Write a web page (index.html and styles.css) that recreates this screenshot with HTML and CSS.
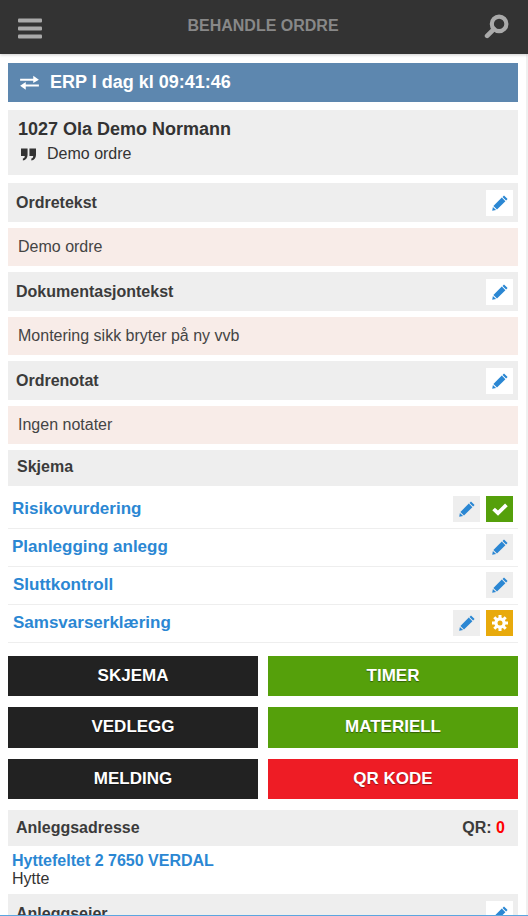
FILE: index.html
```html
<!DOCTYPE html>
<html lang="no">
<head>
<meta charset="utf-8">
<title>Behandle ordre</title>
<link rel="stylesheet" href="styles.css">
</head>
<body>
<svg class="defs" width="0" height="0" aria-hidden="true">
  <symbol id="pencil" viewBox="0 0 16 16">
    <path d="M12 0.4 15.6 4 14.1 5.5 10.5 1.9Z M9.8 2.6 13.4 6.2 5 14.6 1.4 11Z M0.9 11.9 4.1 15.1 0.2 15.8Z" fill="#2b87d3"/>
  </symbol>
</svg>
<header class="topbar">
  <svg class="menu-icon" viewBox="0 0 24 20"><rect y="0" width="24" height="4" rx="1"/><rect y="8" width="24" height="4" rx="1"/><rect y="16" width="24" height="4" rx="1"/></svg>
  <h1 class="title">BEHANDLE ORDRE</h1>
  <svg class="search-icon" viewBox="0 0 24 24"><circle cx="14.5" cy="9.5" r="7" fill="none" stroke="#aaa" stroke-width="4"/><path d="M9.5 14.5 3 21" stroke="#aaa" stroke-width="4.5" stroke-linecap="round"/></svg>
</header>
<main class="page">
  <div class="erp">
    <svg class="erp-icon" viewBox="0 0 20 16"><path d="M0 4H14V0.8L20 5 14 8.4V6.2H0Z M20 10H6V7.4L0 11.5 6 15.6V12.2H20Z" fill="#fff"/></svg>
    <span>ERP I dag kl 09:41:46</span>
  </div>
  <section class="order">
    <div class="order-name">1027 Ola Demo Normann</div>
    <div class="order-desc">
      <svg class="quote" viewBox="0 0 16 13"><path d="M0 0H7V7C7 10 5 12.5 2 13V10.8C3.5 10.4 4 9.4 4 8H0Z M9 0H16V7C16 10 14 12.5 11 13V10.8C12.5 10.4 13 9.4 13 8H9Z" fill="#333"/></svg>
      <span>Demo ordre</span>
    </div>
  </section>

  <div class="head"><span>Ordretekst</span><a class="ic white"><svg><use href="#pencil"/></svg></a></div>
  <div class="note">Demo ordre</div>
  <div class="head"><span>Dokumentasjontekst</span><a class="ic white"><svg><use href="#pencil"/></svg></a></div>
  <div class="note">Montering sikk bryter på ny vvb</div>
  <div class="head"><span>Ordrenotat</span><a class="ic white"><svg><use href="#pencil"/></svg></a></div>
  <div class="note">Ingen notater</div>

  <div class="head short skjema"><span>Skjema</span></div>
  <ul class="forms">
    <li><a>Risikovurdering</a><span class="ic grey"><svg><use href="#pencil"/></svg></span><span class="ic green"><svg viewBox="0 0 16 16"><path d="M1.6 8 6 12.2 14.4 3.8" fill="none" stroke="#fff" stroke-width="3.8"/></svg></span></li>
    <li><a>Planlegging anlegg</a><span class="ic grey"><svg><use href="#pencil"/></svg></span></li>
    <li><a class="in1">Sluttkontroll</a><span class="ic grey"><svg><use href="#pencil"/></svg></span></li>
    <li><a class="in1">Samsvarserklæring</a><span class="ic grey"><svg><use href="#pencil"/></svg></span><span class="ic amber"><svg viewBox="0 0 16 16"><path d="M8 0V16M0 8H16M2.3 2.3 13.7 13.7M13.7 2.3 2.3 13.7" stroke="#fff" stroke-width="3"/><circle cx="8" cy="8" r="5.7" fill="#fff"/><circle cx="8" cy="8" r="2.5" fill="#e8aa0c"/></svg></span></li>
  </ul>

  <div class="actions">
    <button class="btn dark">SKJEMA</button>
    <button class="btn green-btn">TIMER</button>
    <button class="btn dark tall">VEDLEGG</button>
    <button class="btn green-btn tall">MATERIELL</button>
    <button class="btn dark">MELDING</button>
    <button class="btn red">QR KODE</button>
  </div>

  <div class="head short"><span>Anleggsadresse</span><span class="qr">QR: <b>0</b></span></div>
  <div class="address">
    <a>Hyttefeltet 2 7650 VERDAL</a>
    <div>Hytte</div>
  </div>
  <div class="head"><span>Anleggseier</span><a class="ic white"><svg><use href="#pencil"/></svg></a></div>
</main>
<div class="bottom-line"></div>
</body>
</html>
```

FILE: styles.css
```css
* { box-sizing: border-box; }
html, body { margin: 0; padding: 0; height: 916px; overflow: hidden; background: #fff; }
body { font-family: "Liberation Sans", Arial, sans-serif; font-size: 16px; color: #333; position: relative; }
.defs { position: absolute; }

.topbar {
  height: 54px; background: #333; display: flex; align-items: center; justify-content: space-between;
  padding: 0 19px 0 18px; box-shadow: 0 1px 3px rgba(0,0,0,.2); position: relative;
}
.menu-icon { width: 24px; height: 21px; fill: #aaa; margin-top: 2px; }
.title { margin: -3px 0 0; font-size: 16px; line-height: 18px; font-weight: bold; color: #888; }
.search-icon { width: 25px; height: 25px; margin-top: -1px; }

.page { padding: 9px 8px 0 8px; border-right: 2px solid #f0f0f0; height: 862px; overflow: hidden; }
.erp {
  height: 39px; background: #5d87af; color: #fff; display: flex; align-items: center; gap: 11px;
  padding-left: 12px; font-size: 18px; font-weight: bold;
}
.erp-icon { width: 19px; height: 15px; }
.order { background: #eee; margin-top: 8px; height: 65px; padding: 9px 10px; }
.order-name { font-size: 18px; font-weight: bold; line-height: 20px; color: #333; }
.order-desc { display: flex; align-items: center; gap: 11px; margin-top: 5px; line-height: 20px; color: #333; padding-left: 3px; }
.quote { width: 15px; height: 13px; }

.head {
  height: 39px; background: #eee; display: flex; align-items: center; justify-content: space-between;
  padding: 0 5px 0 8px; margin-top: 8px; font-weight: bold; color: #3b3b3b;
}
.head.short { height: 36px; margin-top: 6px; padding-right: 13px; }
.head.skjema { padding-left: 9px; padding-bottom: 2px; }
.ic { width: 27px; height: 26px; display: flex; align-items: center; justify-content: center; flex: none; }
.ic svg { width: 16px; height: 16px; }
.white { background: #fff; }
.grey { background: #eee; }
.green { background: #55a00b; }
.amber { background: #e8aa0c; }
.note { height: 38px; margin-top: 6px; background: #f8ece8; padding: 0 10px; line-height: 37px; color: #444; }
.note + .head { margin-top: 6px; }

.forms { list-style: none; margin: 0; padding: 0; }
.forms li {
  height: 38px; border-bottom: 1px solid #eee; display: flex; align-items: center; gap: 6px;
  padding: 0 5px 1px 4px;
}
.forms li:first-child { height: 43px; padding-top: 4px; padding-bottom: 0; }
.forms a { margin-right: auto; font-size: 17px; font-weight: bold; color: #2b87d3; }
.forms a.in1 { margin-left: 1px; }

.actions { display: grid; grid-template-columns: 250px 250px; column-gap: 10px; margin-top: 13px; }
.btn {
  height: 40px; margin: 0 0 11px; border: 0; padding: 0 0 1px; font: bold 17px "Liberation Sans", Arial, sans-serif; color: #fff;
  text-shadow: 0 1px 1px rgba(0,0,0,.4);
}
.btn.tall { height: 41px; }
.dark { background: #222; }
.green-btn { background: #55a00b; }
.red { background: #ee1c25; }

.qr { font-weight: bold; color: #3b3b3b; }
.qr b { color: #f00; }
.actions + .head { margin-top: 0; }
.address { padding: 6px 4px 0; height: 48px; line-height: 18px; color: #333; }
.address a { font-weight: bold; color: #2b87d3; display: block; }
.address + .head { margin-top: 0; }

.bottom-line { position: absolute; left: 0; right: 0; bottom: 0; height: 1px; background: #5ba6e0; }
```
